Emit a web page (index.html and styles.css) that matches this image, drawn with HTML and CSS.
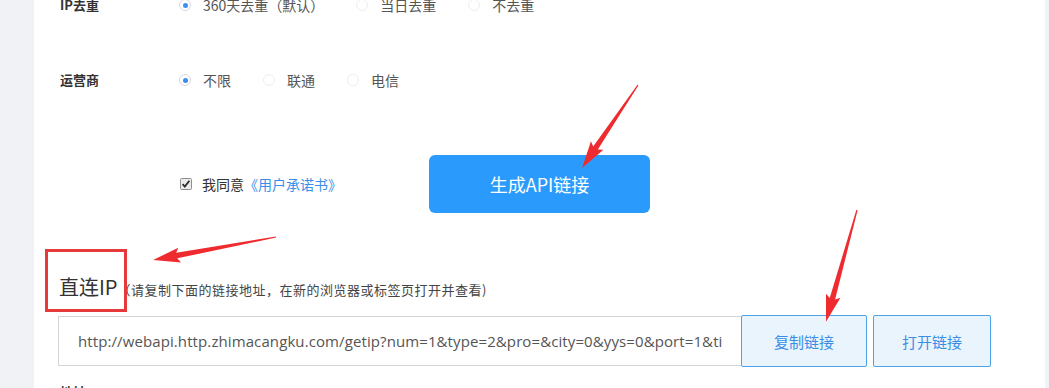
FILE: index.html
```html
<!DOCTYPE html>
<html lang="zh-CN">
<head>
<meta charset="utf-8">
<title>直连IP</title>
<link rel="stylesheet" href="styles.css">
</head>
<body>
<div class="page">
  <div class="panel">
    <div class="row row-first">
      <div class="label">IP去重</div>
      <div class="options">
        <span class="opt"><span class="radio on"></span>360天去重（默认）</span>
        <span class="opt"><span class="radio"></span>当日去重</span>
        <span class="opt"><span class="radio"></span>不去重</span>
      </div>
    </div>
    <div class="row row-second">
      <div class="label">运营商</div>
      <div class="options">
        <span class="opt"><span class="radio on"></span>不限</span>
        <span class="opt"><span class="radio"></span>联通</span>
        <span class="opt"><span class="radio"></span>电信</span>
      </div>
    </div>
    <div class="submit-row">
      <div class="agree">
        <svg class="check" width="12" height="12" viewBox="0 0 12 12"><rect x="0.5" y="0.5" width="11" height="11" rx="1" fill="#ececec" stroke="#8e8e8e"/><path d="M2.6 6.2 L4.8 8.6 L9.4 2.8" fill="none" stroke="#2b2b2b" stroke-width="1.8"/></svg>
        <span class="agree-text">我同意</span><a class="agree-link">《用户承诺书》</a>
      </div>
      <button class="gen-btn">生成API链接</button>
    </div>
    <div class="heading">
      <span class="heading-title">直连IP</span><span class="heading-hint">（请复制下面的链接地址，在新的浏览器或标签页打开并查看)</span>
    </div>
    <div class="link-row">
      <input class="link-input" readonly value="http://webapi.http.zhimacangku.com/getip?num=1&amp;type=2&amp;pro=&amp;city=0&amp;yys=0&amp;port=1&amp;time=1&amp;ts=0&amp;ys=0&amp;cs=0&amp;lb=1&amp;sb=0&amp;pb=4&amp;mr=1&amp;regions=">
      <button class="link-btn">复制链接</button>
      <button class="link-btn">打开链接</button>
    </div>
    <div class="row row-addr">
      <div class="label">地址</div>
    </div>
  </div>
</div>
<div class="mark-box"></div>
<svg class="marks" width="1049" height="388" viewBox="0 0 1049 388">
  <g fill="#ee2b2f">
    <polygon transform="translate(638 85) rotate(124)" points="0,-0.6 76,-2.8 73,-7.5 100,0 73,7.5 76,2.8 0,0.6"/>
    <polygon transform="translate(276 237) rotate(169.4)" points="0,-0.6 101,-2.8 98,-7.5 125,0 98,7.5 101,2.8 0,0.6"/>
    <polygon transform="translate(857 210) rotate(105.5)" points="0,-0.6 92,-2.8 89,-7.5 116,0 89,7.5 92,2.8 0,0.6"/>
  </g>
</svg>
</body>
</html>
```
FILE: styles.css
```css
* { box-sizing: border-box; }
html, body { margin: 0; padding: 0; }
body {
  background: #f1f2f6;
  font-family: "Noto Sans CJK SC", "Noto Sans", sans-serif;
  color: #333;
  width: 1049px;
  height: 388px;
  overflow: hidden;
  position: relative;
}
.page {
  display: flex;
  height: 388px;
  padding: 0 4px 0 34px;
}
.panel {
  flex: 1;
  background: #fff;
  padding-left: 26px;
  overflow: hidden;
}
.row {
  display: flex;
  align-items: center;
  height: 20px;
}
.row-first { margin-top: -5px; }
.row-second { margin-top: 55px; }
.label {
  width: 119px;
  font-size: 13px;
  font-weight: bold;
  color: #333;
  line-height: 20px;
  white-space: nowrap;
}
.options { display: flex; align-items: center; }
.opt {
  display: flex;
  align-items: center;
  font-size: 14px;
  color: #555;
  margin-right: 32px;
  line-height: 20px;
  white-space: nowrap;
}
.radio {
  width: 12px;
  height: 12px;
  border-radius: 50%;
  border: 1px solid #eeeeee;
  margin-right: 12px;
  display: flex;
  align-items: center;
  justify-content: center;
}
.radio.on { border-color: #d9d6e4; }
.radio.on::after {
  content: "";
  width: 5px;
  height: 5px;
  border-radius: 50%;
  background: #3b8ff0;
}
.submit-row {
  display: flex;
  align-items: center;
  margin-top: 65px;
  height: 58px;
}
.agree {
  flex: none;
  width: 369px;
  padding-left: 120px;
  display: flex;
  align-items: center;
  font-size: 14px;
  white-space: nowrap;
}
.check { margin-right: 10px; flex: none; }
.agree-text { color: #333; }
.agree-link { color: #3b8ee8; }
.gen-btn {
  flex: none;
  width: 221px;
  height: 58px;
  border: none;
  border-radius: 6px;
  background: #2a9bfc;
  color: #fff;
  font-family: inherit;
  font-size: 18px;
  padding: 0;
}
.heading {
  margin-top: 59px;
  height: 30px;
  line-height: 30px;
  display: flex;
  align-items: baseline;
  white-space: nowrap;
}
.heading-title {
  font-size: 20px;
  color: #333;
  margin-left: -1px;
}
.heading-hint {
  font-size: 13px;
  letter-spacing: 0.5px;
  color: #444;
}
.link-row {
  display: flex;
  align-items: center;
  margin-top: 13px;
  margin-left: -2px;
}
.link-input {
  flex: none;
  width: 683px;
  height: 50px;
  border: 1px solid #d4d4d4;
  border-right: none;
  padding: 0 18px 0 19px;
  font-family: "Open Sans", sans-serif;
  font-size: 15px;
  letter-spacing: 0.1px;
  color: #555;
  background: #fff;
  outline: none;
}
.link-btn {
  flex: none;
  height: 52px;
  border: 1px solid #4ba3eb;
  border-radius: 2px;
  background: #e9f4fd;
  color: #3a8ee6;
  font-family: inherit;
  font-size: 15px;
  padding: 0;
}
.link-btn:nth-of-type(1) { width: 126px; }
.link-btn:nth-of-type(2) { width: 118px; margin-left: 6px; }
.row-addr { margin-top: 15px; }
.mark-box {
  position: absolute;
  left: 45px;
  top: 249px;
  width: 82px;
  height: 63px;
  border: 3px solid #e5393b;
}
.marks {
  position: absolute;
  left: 0;
  top: 0;
  pointer-events: none;
}
```
